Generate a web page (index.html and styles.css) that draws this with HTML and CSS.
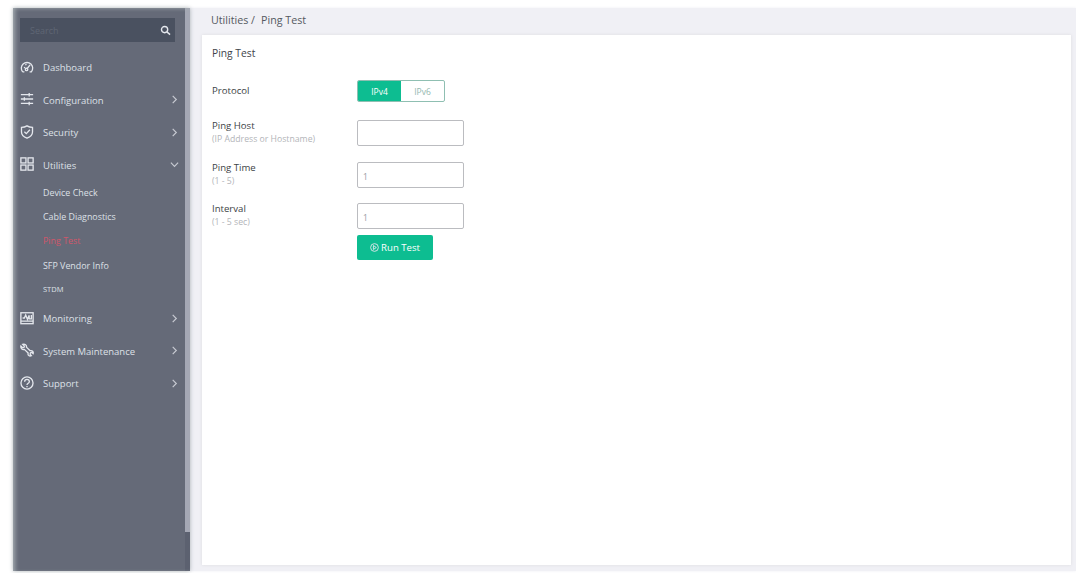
FILE: index.html
```html
<!DOCTYPE html>
<html lang="en">
<head>
    <meta charset="UTF-8">
    <title>Ping Test</title>
    <link rel="stylesheet" href="styles.css">
</head>
<body>
    <div class="app">
        <aside class="sidebar">
            <div class="sidebar-inner">
                <div class="search">
                    <span class="search-text">Search</span>
                    <svg class="search-icon" viewBox="0 0 12 12"><circle cx="5" cy="5" r="3.4"/><path d="M7.5 7.5L11 10.5"/></svg>
                </div>
                <nav class="menu">
                    <a class="item">
                        <svg class="icon" viewBox="0 0 16 16"><path d="M3 13.500A6.500 6.500 0 1 1 13 13.500H11M3 13.500h2M8 10l3.500-4.500M4.500 8.500L6 9M6.500 4.500L7 6"/><circle cx="7.500" cy="10.800" r="1.400"/></svg>
                        <span>Dashboard</span>
                    </a>
                    <a class="item">
                        <svg class="icon" viewBox="0 0 16 16"><path d="M1 3h14M1 8h14M1 13h14M10.500 1v4M5 6v4M10.500 11v4"/></svg>
                        <span>Configuration</span>
                        <svg class="chevron" viewBox="0 0 10 10"><path d="M3 1l4 4-4 4"/></svg>
                    </a>
                    <a class="item">
                        <svg class="icon" viewBox="0 0 16 16"><path d="M8 1C10 2.300 12 2.800 14.300 2.800V8c0 3.300-3 5.800-6.300 7-3.300-1.200-6.300-3.700-6.300-7V2.800C4 2.800 6 2.300 8 1z"/><path d="M5 7.700l2.200 2.200L11.300 5.500"/></svg>
                        <span>Security</span>
                        <svg class="chevron" viewBox="0 0 10 10"><path d="M3 1l4 4-4 4"/></svg>
                    </a>
                    <a class="item">
                        <svg class="icon" viewBox="0 0 16 16"><rect x="1" y="1" width="5.800" height="5.800"/><rect x="9.200" y="1" width="5.800" height="5.800"/><rect x="1" y="9.200" width="5.800" height="5.800"/><rect x="9.200" y="9.200" width="5.800" height="5.800"/></svg>
                        <span>Utilities</span>
                        <svg class="chevron" viewBox="0 0 10 10"><path d="M1 3l4 4 4-4"/></svg>
                    </a>
                    <div class="submenu">
                        <a class="subitem">Device Check</a>
                        <a class="subitem">Cable Diagnostics</a>
                        <a class="subitem active">Ping Test</a>
                        <a class="subitem">SFP Vendor Info</a>
                        <a class="subitem small">STDM</a>
                    </div>
                    <a class="item">
                        <svg class="icon" viewBox="0 0 16 16"><rect x="1" y="2" width="14" height="12.500"/><path d="M1 11.500h14M3 8h2l1.500-3.500 2 5L10.500 5v4H13V4.500"/></svg>
                        <span>Monitoring</span>
                        <svg class="chevron" viewBox="0 0 10 10"><path d="M3 1l4 4-4 4"/></svg>
                    </a>
                    <a class="item">
                        <svg class="icon" viewBox="0 0 16 16"><path d="M3 1.500l2 2-.5 1.500-1.500.5-2-2C.5 6 2.500 8.200 5 7.300l4.300 4.200c-.7 2.500 1.500 4 3.700 3l-1.500-1.800.5-1.500 1.500-.4 1.500 1.400c.7-2.200-1-4-3.400-3.400L7.300 4.700C8 2.500 5.500.5 3 1.500z"/></svg>
                        <span>System Maintenance</span>
                        <svg class="chevron" viewBox="0 0 10 10"><path d="M3 1l4 4-4 4"/></svg>
                    </a>
                    <a class="item">
                        <svg class="icon" viewBox="0 0 16 16"><circle cx="8" cy="8" r="6.900"/><path d="M5.300 6.500c0-3.400 5.400-3.400 5.400 0C10.700 8.300 8 8.200 8 10.200M8 11.300v1.500"/></svg>
                        <span>Support</span>
                        <svg class="chevron" viewBox="0 0 10 10"><path d="M3 1l4 4-4 4"/></svg>
                    </a>
                </nav>
            </div>
            <div class="scroll-track"><div class="scroll-thumb"></div></div>
        </aside>

        <main class="content">
            <div class="breadcrumb"><span>Utilities /</span><span>Ping Test</span></div>
            <section class="card">
                <h1>Ping Test</h1>
                <form class="form">
                    <div class="row protocol">
                        <div class="label">Protocol</div>
                        <div class="toggle"><span class="on">IPv4</span><span>IPv6</span></div>
                    </div>
                    <div class="row">
                        <div class="label">Ping Host<small>(IP Address or Hostname)</small></div>
                        <input type="text">
                    </div>
                    <div class="row">
                        <div class="label">Ping Time<small>(1 - 5)</small></div>
                        <input type="text" value="1">
                    </div>
                    <div class="row">
                        <div class="label">Interval<small>(1 - 5 sec)</small></div>
                        <input type="text" value="1">
                    </div>
                    <button type="button" class="run">
                        <svg viewBox="0 0 10 10"><circle cx="5" cy="5" r="4.300"/><path d="M3.800 2.800L7 5 3.800 7.200z"/></svg>
                        Run Test
                    </button>
                </form>
            </section>
        </main>
    </div>
</body>
</html>
```
FILE: styles.css
```css
* {
    box-sizing: border-box;
}
body {
    margin: 0;
    padding: 8px 0 0 13px;
    height: 573px;
    overflow: hidden;
    background: #fff;
    font-family: "Open Sans", "Noto Sans", sans-serif;
}
.app {
    display: flex;
    height: 563px;
}

/* sidebar */
.sidebar {
    position: relative;
    display: flex;
    width: 177px;
    background: #656a78;
    box-shadow: 0 0 4px #a9b0b4;
}
.sidebar::after {
    content: "";
    position: absolute;
    inset: 0;
    box-shadow: inset 3px 1px 4px -1px #a3abb0;
}
.sidebar-inner {
    width: 172px;
    padding: 10px 10px 0 7px;
}
.search {
    display: flex;
    align-items: center;
    justify-content: space-between;
    height: 24px;
    padding: 0 4px 0 10px;
    background: #4a5160;
}
.search-text {
    color: #5f6674;
    font-size: 9px;
}
.search-icon {
    width: 11px;
    height: 11px;
}
svg {
    fill: none;
    stroke: #e4e7ed;
    stroke-width: 1.5;
}
.menu {
    padding-top: 9.5px;
}
.item {
    display: flex;
    align-items: center;
    height: 32.5px;
    color: #dde0e7;
    font-size: 9.5px;
}
.icon {
    width: 14px;
    height: 14px;
    margin: 0 9px 2px 0;
}
.chevron {
    width: 9px;
    height: 9px;
    margin: 0 -4px 1px auto;
    stroke: #c7cad2;
    stroke-width: 1.3;
}
.submenu {
    padding-left: 23px;
    height: 121px;
}
.subitem {
    display: block;
    height: 24.4px;
    line-height: 22px;
    color: #dde0e7;
    font-size: 8.9px;
}
.subitem.active {
    color: #d0576b;
}
.subitem.small {
    line-height: 20px;
    font-size: 7.5px;
}
.scroll-track {
    width: 5px;
    background: #5c6170;
}
.scroll-thumb {
    height: 524px;
    background: #a5a8b5;
}

/* content */
.content {
    flex: 1;
    padding: 0 5px 0 12px;
    background: #f0f0f5;
    box-shadow: 0 0 3px #f0f0f5;
}
.breadcrumb {
    display: flex;
    gap: 6px;
    height: 27px;
    padding-left: 9px;
    line-height: 25px;
    color: #555961;
    font-size: 10.7px;
}
.card {
    height: 530px;
    padding: 9px 0 0 10px;
    background: #fff;
    box-shadow: 0 0 3px #dcdce0;
}
h1 {
    margin: 0;
    height: 36px;
    line-height: 18px;
    color: #41444a;
    font-size: 10.3px;
    font-weight: 400;
}
.row {
    display: flex;
    height: 41.5px;
}
.row.protocol {
    height: 40px;
}
.label {
    width: 145px;
    line-height: 11px;
    color: #3c3f45;
    font-size: 9.6px;
    font-weight: 500;
}
.protocol .label {
    padding-top: 5px;
}
.label small {
    display: block;
    line-height: 17px;
    color: #b3b5b9;
    font-size: 8.7px;
    font-weight: 400;
}
.toggle {
    display: flex;
    width: 88px;
    height: 22px;
    border: 1px solid #8fbfb2;
    border-radius: 2px;
    overflow: hidden;
}
.toggle span {
    flex: 1;
    line-height: 21px;
    text-align: center;
    color: #94b8af;
    font-size: 8.5px;
}
.toggle .on {
    background: #0dbd91;
    color: #fff;
}
input {
    width: 107px;
    height: 26px;
    padding: 3px 5px 0;
    border: 1px solid #bbbcc0;
    border-radius: 2px;
    color: #999ca1;
    font-family: inherit;
    font-size: 8.5px;
}
.run {
    display: flex;
    align-items: center;
    justify-content: center;
    gap: 2px;
    width: 76px;
    height: 25px;
    margin: -9.5px 0 0 145px;
    padding: 0;
    border: none;
    border-radius: 2px;
    background: #0dbd91;
    color: #fff;
    font-family: inherit;
    font-size: 9.6px;
    font-weight: 500;
}
.run svg {
    width: 9px;
    height: 9px;
    stroke-width: 1;
}
```
